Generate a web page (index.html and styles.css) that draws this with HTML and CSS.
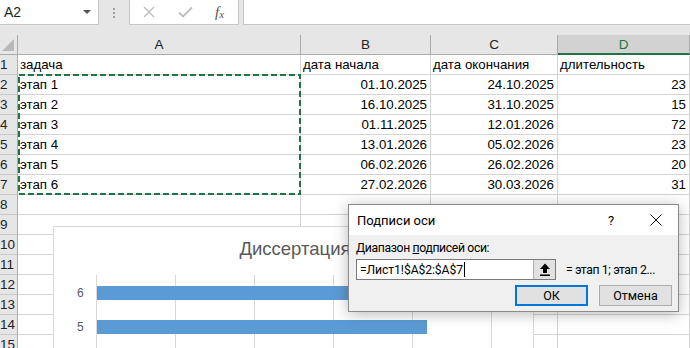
FILE: index.html
```html
<!DOCTYPE html>
<html lang="ru">
<head>
<meta charset="utf-8">
<title>Excel</title>
<link rel="stylesheet" href="styles.css">
</head>
<body>
<div class="app">
  <div class="fbar">
    <div class="namebox"><span class="nb-text">A2</span><span class="nb-dd"></span></div>
    <div class="grip"><i></i><i></i><i></i></div>
    <div class="fbtns">
      <svg class="ic-x" width="12" height="12" viewBox="0 0 12 12"><path d="M1 1 L11 11 M11 1 L1 11" stroke="#bdbdbd" stroke-width="1.4" fill="none"/></svg>
      <svg class="ic-ok" width="15" height="12" viewBox="0 0 15 12"><path d="M1 6.5 L5 10.5 L14 1.5" stroke="#bdbdbd" stroke-width="1.8" fill="none"/></svg>
      <span class="fx">f<sub>x</sub></span>
    </div>
    <div class="finput"></div>
  </div>

  <div class="sheet">
    <div class="grid">
      <div class="corner"><span class="tri"></span></div>
      <div class="ch">A</div><div class="ch">B</div><div class="ch">C</div><div class="ch ch-sel">D</div>

      <div class="rh">1</div><div class="c">задача</div><div class="c">дата начала</div><div class="c">дата окончания</div><div class="c">длительность</div>
      <div class="rh">2</div><div class="c">этап 1</div><div class="c n">01.10.2025</div><div class="c n">24.10.2025</div><div class="c n">23</div>
      <div class="rh">3</div><div class="c">этап 2</div><div class="c n">16.10.2025</div><div class="c n">31.10.2025</div><div class="c n">15</div>
      <div class="rh">4</div><div class="c">этап 3</div><div class="c n">01.11.2025</div><div class="c n">12.01.2026</div><div class="c n">72</div>
      <div class="rh">5</div><div class="c">этап 4</div><div class="c n">13.01.2026</div><div class="c n">05.02.2026</div><div class="c n">23</div>
      <div class="rh">6</div><div class="c">этап 5</div><div class="c n">06.02.2026</div><div class="c n">26.02.2026</div><div class="c n">20</div>
      <div class="rh">7</div><div class="c">этап 6</div><div class="c n">27.02.2026</div><div class="c n">30.03.2026</div><div class="c n">31</div>
      <div class="rh">8</div><div class="c"></div><div class="c"></div><div class="c"></div><div class="c"></div>
      <div class="rh">9</div><div class="c"></div><div class="c"></div><div class="c"></div><div class="c"></div>
      <div class="rh">10</div><div class="c"></div><div class="c"></div><div class="c"></div><div class="c"></div>
      <div class="rh">11</div><div class="c"></div><div class="c"></div><div class="c"></div><div class="c"></div>
      <div class="rh">12</div><div class="c"></div><div class="c"></div><div class="c"></div><div class="c"></div>
      <div class="rh">13</div><div class="c"></div><div class="c"></div><div class="c"></div><div class="c"></div>
      <div class="rh">14</div><div class="c"></div><div class="c"></div><div class="c"></div><div class="c"></div>
      <div class="rh">15</div><div class="c"></div><div class="c"></div><div class="c"></div><div class="c"></div>
    </div>

    <svg class="marquee" width="285" height="123" viewBox="0 0 285 123"><rect x="2" y="2" width="281" height="119" fill="none" stroke="#217346" stroke-width="2" stroke-dasharray="6 3"/></svg>

    <div class="chart">
      <div class="chart-title">Диссертация</div>
      <div class="plot">
        <div class="brow"><span class="blabel">6</span><span class="bar bar6"></span></div>
        <div class="brow"><span class="blabel">5</span><span class="bar" style="width:330px"></span></div>
      </div>
    </div>

    <div class="dialog">
      <div class="dlg-title">
        <span class="dlg-name">Подписи оси</span>
        <span class="dlg-help">?</span>
        <svg class="dlg-close" width="12" height="12" viewBox="0 0 12 12"><path d="M0.5 0.5 L11.5 11.5 M11.5 0.5 L0.5 11.5" stroke="#111" stroke-width="1" fill="none"/></svg>
      </div>
      <div class="dlg-body">
        <div class="dlg-label">Диапазон <u>п</u>одписей оси:</div>
        <div class="dlg-row">
          <div class="ref">
            <span class="ref-text">=Лист1!$A$2:$A$7</span><span class="caret"></span>
            <span class="ref-btn"><svg width="12" height="13" viewBox="0 0 12 13"><path d="M6 0.5 L11 6 L8 6 L8 10 L4 10 L4 6 L1 6 Z" fill="#000"/><rect x="1" y="11.5" width="10" height="1.5" fill="#000"/></svg></span>
          </div>
          <span class="preview">= этап 1; этап 2...</span>
        </div>
        <div class="dlg-btns">
          <span class="btn btn-ok">ОК</span>
          <span class="btn">Отмена</span>
        </div>
      </div>
    </div>
  </div>
</div>
</body>
</html>
```

FILE: styles.css
```css
* { box-sizing: border-box; }
html, body { margin: 0; padding: 0; }
body {
  width: 690px; height: 348px; overflow: hidden;
  font-family: "Liberation Sans", Arial, sans-serif;
  background: #fff;
}
.app { width: 690px; height: 348px; overflow: hidden; background: #e6e6e6; }

/* formula bar */
.fbar { height: 35px; display: flex; align-items: flex-start; background: #e6e6e6; }
.namebox {
  width: 99px; height: 25px; background: #fff;
  border-right: 1px solid #c6c6c6; border-bottom: 1px solid #c6c6c6;
  display: flex; align-items: center; justify-content: space-between;
  padding: 0 5px 0 4px;
}
.nb-text { font-size: 14px; color: #222; }
.nb-dd { width: 0; height: 0; border-left: 4px solid transparent; border-right: 4px solid transparent; border-top: 4px solid #555; margin-right: 2px; }
.grip { width: 30px; height: 25px; display: flex; flex-direction: column; align-items: center; justify-content: center; gap: 2px; }
.grip i { display: block; width: 2px; height: 2px; background: #a0a0a0; }
.fbtns {
  width: 110px; height: 25px; background: #fff;
  border: 1px solid #c6c6c6; border-top: 0;
  display: flex; align-items: center; padding: 0 0 0 13px;
}
.ic-x { margin-right: 23px; }
.ic-ok { margin-right: 22px; }
.fx { font-family: "Liberation Serif", serif; font-style: italic; font-size: 15px; color: #555; }
.fx sub { font-size: 11px; vertical-align: -1px; }
.finput { flex: 1; height: 25px; margin-left: 4px; background: #fff; border-left: 1px solid #c6c6c6; border-bottom: 1px solid #c6c6c6; }

/* sheet */
.sheet { position: relative; height: 313px; background: #fff; }
.grid {
  display: grid;
  grid-template-columns: 18px 283px 130px 127px 132px;
  grid-template-rows: 20px;
  grid-auto-rows: 20px;
  font-size: 13px; color: #000;
}
.corner { background: #e6e6e6; border-right: 1px solid #ababab; border-bottom: 1px solid #ababab; display: flex; align-items: flex-end; justify-content: flex-end; padding: 0 3px 3px 0; }
.tri { width: 0; height: 0; border-left: 12px solid transparent; border-bottom: 12px solid #b9b9b9; }
.ch {
  background: #e6e6e6; border-right: 1px solid #ababab; border-bottom: 1px solid #ababab;
  display: flex; align-items: center; justify-content: center; font-size: 13.5px; color: #222;
}
.ch-sel { background: #d2d2d2; border-bottom: 2px solid #217346; color: #217346; }
.rh {
  background: #e6e6e6; border-right: 1px solid #ababab; border-bottom: 1px solid #c9c9c9;
  display: flex; align-items: center; justify-content: flex-start; font-size: 13.5px; color: #222;
  padding-left: 0; white-space: nowrap;
}
.c {
  border-right: 1px solid #d4d4d4; border-bottom: 1px solid #d4d4d4;
  display: flex; align-items: flex-end; padding: 0 3px 2px 2px; white-space: nowrap; overflow: hidden;
  font-size: 13.3px;
}
.c.n { justify-content: flex-end; }

.marquee { position: absolute; left: 17px; top: 38px; }

/* chart */
.chart {
  position: absolute; left: 53px; top: 191px; width: 481px; height: 140px;
  background: #fff; border: 1px solid #d9d9d9;
}
.chart-title { text-align: center; font-size: 18.5px; color: #595959; padding-top: 11px; padding-left: 3px; height: 48px; }
.plot {
  margin-left: 42px; height: 90px; padding-top: 11px;
  background-image: repeating-linear-gradient(to right, #d9d9d9 0 1px, transparent 1px 79px);
  display: flex; flex-direction: column; gap: 20px;
}
.brow { display: flex; align-items: center; height: 14px; }
.blabel { width: 0; position: relative; left: -19px; font-size: 12px; color: #595959; }
.bar { display: block; height: 14px; background: #5b9bd5; margin-left: 1px; }
.bar6 { width: 420px; }

/* dialog */
.dialog {
  position: absolute; left: 348px; top: 169px; width: 331px; height: 108px;
  border: 1px solid #8a8a8a; background: #f0f0f0;
  box-shadow: 0 2px 14px rgba(0,0,0,0.28);
  font-family: Roboto, "Noto Sans", sans-serif; color: #000;
}
.dlg-title { height: 30px; background: #fff; display: flex; align-items: center; padding: 0 0 0 8px; }
.dlg-name { font-size: 13px; flex: 1; }
.dlg-help { font-size: 13px; width: 20px; margin-right: 29px; text-align: center; }
.dlg-close { margin-right: 16px; }
.dlg-body { padding: 5px 0 0 7px; }
.dlg-label { font-size: 12.2px; line-height: 17px; letter-spacing: -0.35px; }
.dlg-row { display: flex; align-items: center; margin-top: 2px; }
.ref {
  width: 200px; height: 21px; background: #fff; border: 1px solid #7a7a7a;
  display: flex; align-items: center; padding-left: 3px;
}
.ref-text { font-size: 12.2px; letter-spacing: -0.1px; }
.caret { width: 1px; height: 15px; background: #000; margin-left: 1px; }
.ref-btn {
  margin-left: auto; width: 22px; height: 19px; background: #e1e1e1; border-left: 1px solid #adadad;
  display: flex; align-items: center; justify-content: center;
}
.preview { font-size: 12.2px; margin-left: 10px; letter-spacing: -0.35px; }
.dlg-btns { display: flex; gap: 11px; margin-top: 5px; margin-left: 159px; }
.btn {
  width: 73px; height: 21px; background: #e1e1e1; border: 1px solid #adadad;
  display: flex; align-items: center; justify-content: center; font-size: 12.5px;
}
.btn-ok { border: 2px solid #0078d7; }
```
